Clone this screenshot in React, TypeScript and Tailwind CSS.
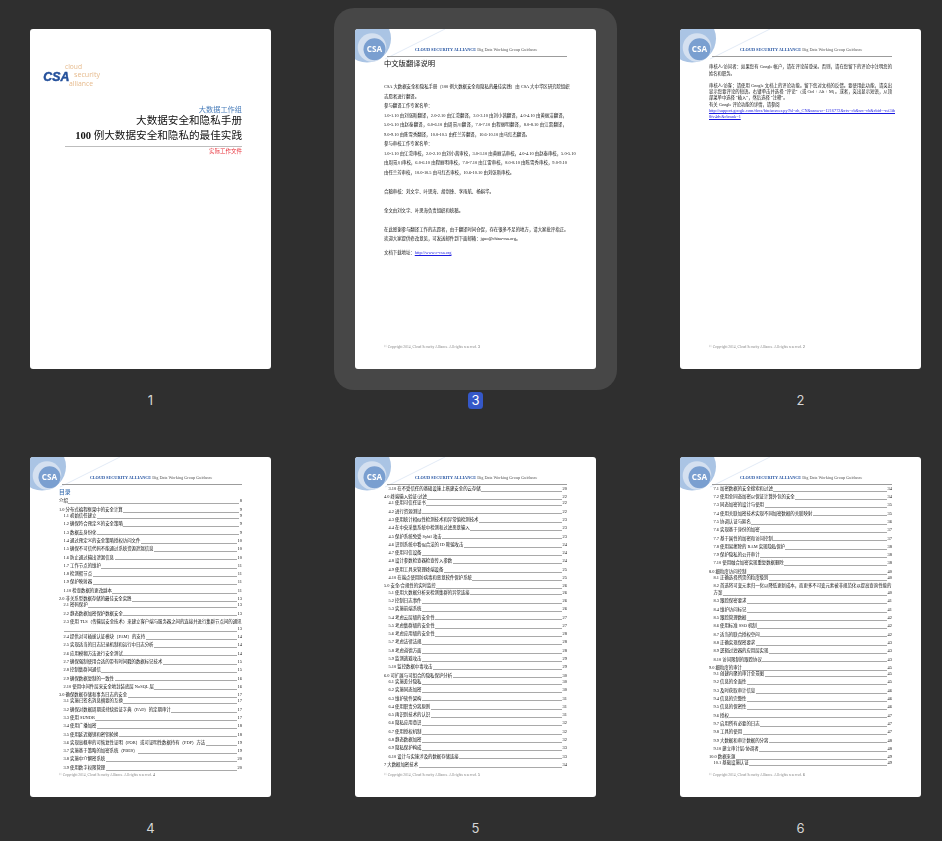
import React from "react";

const serif = "[font-family:'Liberation_Serif','Noto_Sans_CJK_SC',serif]";

type Row = { l: 0 | 1; t: string; p: number; cont?: string };
const ch = (t: string, p: number): Row => ({ l: 0, t, p });
const sub = (t: string, p: number, cont?: string): Row => ({ l: 1, t, p, cont });

const toc4: Row[] = [
  ch("介绍", 8),
  ch("1.0 分布式编程框架中的安全计算", 9),
  sub("1.1 初始信任建立", 9),
  sub("1.2 确保符合预定义的安全策略", 9),
  sub("1.3 数据去身份化", 9),
  sub("1.4 通过预定义的安全策略授权访问文件", 10),
  sub("1.5 确保不可信代码不能通过系统资源泄漏信息", 10),
  sub("1.6 防止通过输出泄漏信息", 10),
  sub("1.7 工作节点的维护", 11),
  sub("1.8 检测假节点", 11),
  sub("1.9 保护映射器", 11),
  sub("1.10 检查数据的更改副本", 11),
  ch("2.0 非关系型数据存储的最佳安全实践", 13),
  sub("2.1 密码保护", 13),
  sub("2.2 静态数据加密保护数据安全", 13),
  sub("2.3 使用 TLS（传输层安全技术）来建立客户端与服务器之间的连接并进行集群节点间的通讯", 13, ""),
  sub("2.4 提供对可插拔认证模块（PAM）的支持", 14),
  sub("2.5 实现适当的日志记录机制和运行中日志分析", 14),
  sub("2.6 应用模糊方法进行安全测试", 14),
  sub("2.7 确保强制使用合适的带有时间戳的数据标记技术", 15),
  sub("2.8 控制集群间通信", 15),
  sub("2.9 确保数据复制的一致性", 16),
  sub("2.10 使用中间件层来安全地封装底层 NoSQL 层", 16),
  ch("3.0 确保数据存储和事务日志的安全", 17),
  sub("3.1 实施已签名消息摘要的互换", 17),
  sub("3.2 确保对数据周期或持续验证字典（PAD）的定期审计", 17),
  sub("3.3 使用 SUNDR", 17),
  sub("3.4 使用广播加密", 18),
  sub("3.5 使用延迟撤销和密钥轮换", 18),
  sub("3.6 实现高概率的可恢复性证明（POR）或可证明性数据持有（PDP）方法", 19),
  sub("3.7 实施基于策略的加密系统（PBES）", 19),
  sub("3.8 实施中介解密系统", 20),
  sub("3.9 使用数字权限管理", 20),
];

const toc5: Row[] = [
  sub("3.10 在不受信任的基础设施上搭建安全的云存储", 20),
  ch("4.0 终端输入验证/过滤", 22),
  sub("4.1 使用可信任证书", 22),
  sub("4.2 进行资源测试", 22),
  sub("4.3 使用统计相似性检测技术和异常值检测技术", 23),
  sub("4.4 在中央采集系统中检测和过滤恶意输入", 23),
  sub("4.5 保护系统免受 Sybil 攻击", 23),
  sub("4.6 识别系统中看似合法的 ID 欺骗攻击", 24),
  sub("4.7 使用可信设备", 24),
  sub("4.8 设计参数检查器检查传入参数", 24),
  sub("4.9 使用工具来管理终端设备", 25),
  sub("4.10 在端点使用防病毒和恶意软件保护系统", 25),
  ch("5.0 安全/合规性的实时监控", 26),
  sub("5.1 使用大数据分析来检测集群的异常连接", 26),
  sub("5.2 控制日志事件", 26),
  sub("5.3 实施前端系统", 26),
  sub("5.4 考虑云层级的安全性", 27),
  sub("5.5 考虑集群级的安全性", 27),
  sub("5.6 考虑应用级的安全性", 28),
  sub("5.7 考虑法律法规", 28),
  sub("5.8 考虑道德方面", 28),
  sub("5.9 监测逃避攻击", 29),
  sub("5.10 监控数据中毒攻击", 29),
  ch("6.0 可扩展与可组合的隐私保护分析", 30),
  sub("6.1 实施差分隐私", 30),
  sub("6.2 实施同态加密", 30),
  sub("6.3 维护软件架构", 31),
  sub("6.4 使用职责分离原则", 31),
  sub("6.5 再识别技术的认识", 31),
  sub("6.6 隐私应用意识", 32),
  sub("6.7 使用授权机制", 32),
  sub("6.8 静态数据加密", 32),
  sub("6.9 隐私保护构成", 33),
  sub("6.10 设计与实施涉及的数据存储连接", 33),
  ch("7 大数据加密技术", 34),
];

const toc6: Row[] = [
  sub("7.1 加密数据的安全搜索和过滤", 34),
  sub("7.2 使用全同态加密以保证计算外包的安全", 34),
  sub("7.3 同态加密的设计与使用", 35),
  sub("7.4 使用关联加密技术实现不同加密数据的关联映射", 35),
  sub("7.5 协调认证与匿名", 36),
  sub("7.6 实现基于身份的加密", 37),
  sub("7.7 基于属性的加密和访问控制", 37),
  sub("7.8 使用易擦除的 RAM 实现隐私保护", 38),
  sub("7.9 保护隐私的公开审计", 38),
  sub("7.10 使用融合加密实现重复数据删除", 38),
  ch("8.0 细粒度访问控制", 40),
  sub("8.1 正确选择所需的粒度级别", 40),
  sub("8.2 首选将可变元素归一化以降低更新成本，而更多不可变元素被非规范化以提高查询性能的", 40, "方案"),
  sub("8.3 跟踪保密要求", 41),
  sub("8.4 维护访问标记", 41),
  sub("8.5 跟踪管理数据", 42),
  sub("8.6 使用标准 SSO 机制", 42),
  sub("8.7 适当的联合授权空间", 42),
  sub("8.8 正确实现保密要求", 43),
  sub("8.9 逻辑过滤器的应用层实现", 43),
  sub("8.10 访问限制的跟踪协议", 43),
  ch("9.0 细粒度的审计", 45),
  sub("9.1 创建内聚的审计全景图", 45),
  sub("9.2 信息的全面性", 45),
  sub("9.3 及时获取审计信息", 46),
  sub("9.4 信息的完整性", 46),
  sub("9.5 信息的保密性", 46),
  sub("9.6 授权", 47),
  sub("9.7 启用所有必要的日志", 47),
  sub("9.8 工具的使用", 47),
  sub("9.9 大数据和审计数据的分离", 48),
  sub("9.10 建立审计层/协调者", 48),
  ch("10.0 数据来源", 49),
  sub("10.1 基础设施认证", 49),
];

function Leader({ p, text }: { p: number; text?: string }) {
  return (
    <div className="flex items-end h-[6.3px] leading-[6.3px]">
      {text ? <span className="whitespace-nowrap">{text}</span> : null}
      <span className="flex-1 h-0 mb-[0.5px] mx-[0.5px] border-b border-[#a9a9a9]" />
      <span>{p}</span>
    </div>
  );
}

function Toc({ rows }: { rows: Row[] }) {
  return (
    <div className={`text-[4.4px] text-[#111] ${serif}`}>
      {rows.map((r, i) => {
        const afterChapter = i > 0 && rows[i - 1].l === 0 && r.l === 1;
        return (
          <div
            key={i}
            className={`${r.l === 1 ? "pl-[4.5px]" : ""} ${i === 0 || afterChapter ? "" : "mt-[2px]"}`}
          >
            {r.cont !== undefined ? (
              <>
                <div className="h-[6.3px] leading-[6.3px] whitespace-nowrap">{r.t}</div>
                <div className="mt-[0.5px]">
                  <Leader p={r.p} text={r.cont || undefined} />
                </div>
              </>
            ) : (
              <Leader p={r.p} text={r.t} />
            )}
          </div>
        );
      })}
    </div>
  );
}

function Logo() {
  return (
    <svg viewBox="0 0 100 40" className="absolute left-0 top-0 w-[100px] h-[40px] blur-[0.25px]">
      <line x1="90" y1="0" x2="30" y2="30" stroke="#dce6f4" strokeWidth="0.8" />
      <circle cx="12" cy="9.5" r="24" fill="#aac4e4" />
      <circle cx="17" cy="18.5" r="14.3" fill="#d4e0f0" />
      <circle cx="19.5" cy="20.3" r="11" fill="#7a9fd0" />
      <text
        x="19.5"
        y="23.2"
        textAnchor="middle"
        fontSize="8.2"
        fontWeight="700"
        fill="#ffffff"
        fontFamily="'Open Sans', sans-serif"
      >
        CSA
      </text>
    </svg>
  );
}

function Header() {
  return (
    <div className="ml-[3px] h-[28.3px] pt-[17.5px] pl-[27.7px] border-b border-[#9c9c9c] shrink-0">
      <div className={`relative text-[4.26px] leading-[5.6px] whitespace-nowrap text-[#555] ${serif}`}>
        <span className="font-bold text-[#1f4f9f]">CLOUD SECURITY ALLIANCE</span> Big Data Working Group Guidance
      </div>
    </div>
  );
}

function Footer({ n }: { n: number }) {
  return (
    <div className={`mt-auto mb-[19px] h-[6px] leading-[6px] text-[3.65px] text-[#888] whitespace-nowrap ${serif}`}>
      © Copyright 2014, Cloud Security Alliance. All rights reserved. <span className="text-[#444]">{n}</span>
    </div>
  );
}

function Sheet({ children, n }: { children: React.ReactNode; n: number }) {
  return (
    <div className="relative w-[241px] h-[340px] bg-white rounded-[3px] overflow-hidden">
      <Logo />
      <div className="relative flex flex-col h-full px-[29px] blur-[0.25px]">
        <Header />
        {children}
        <Footer n={n} />
      </div>
    </div>
  );
}

function Line({ children, full, className = "" }: { children: React.ReactNode; full?: boolean; className?: string }) {
  return (
    <div className={`h-[9.5px] leading-[9.5px] whitespace-nowrap ${full ? "[text-align-last:justify]" : ""} ${className}`}>
      {children}
    </div>
  );
}

function CoverPage() {
  return (
    <div className="w-[241px] h-[340px] bg-white rounded-[3px] overflow-hidden pt-[30px] blur-[0.2px]">
      <svg viewBox="0 0 60 30" className="ml-[13px] w-[60px] h-[30px]">
        <g fontFamily="'Open Sans', sans-serif" fontSize="7.2" fill="#e6bb8e">
          <text x="22" y="10" textLength="17" lengthAdjust="spacingAndGlyphs">cloud</text>
          <text x="31" y="18" textLength="26" lengthAdjust="spacingAndGlyphs">security</text>
          <text x="26" y="26.5" textLength="24" lengthAdjust="spacingAndGlyphs">alliance</text>
        </g>
        <text
          x="0.3"
          y="22"
          fontFamily="'Liberation Sans', sans-serif"
          fontSize="13.5"
          fontWeight="700"
          fontStyle="italic"
          fill="#24509b"
          stroke="#24509b"
          strokeWidth="0.5"
          textLength="26"
          lengthAdjust="spacingAndGlyphs"
        >
          CSA
        </text>
      </svg>
      <div className={`mt-[17.2px] mr-[29px] text-right ${serif}`}>
        <div className="h-[8.3px] leading-[8.3px] text-[7.2px] text-[#4a7ebb]">大数据工作组</div>
        <div className="h-[14.4px] leading-[14.4px] text-[10.6px] text-[#111]">大数据安全和隐私手册</div>
        <div className="h-[14.4px] leading-[14.4px] text-[10.6px] text-[#111]">
          <span className="font-bold">100</span> 例大数据安全和隐私的最佳实践
        </div>
        <div className="mt-[3px] ml-[35px] border-b border-[#bdbdbd]" />
        <div className="mt-[0.5px] h-[7px] leading-[7px] text-[5.5px] text-[#e8333c]">实际工作文件</div>
      </div>
    </div>
  );
}

function Thumb({ n, selected, children }: { n: number; selected?: boolean; children: React.ReactNode }) {
  return (
    <div className="flex flex-col items-center w-[283px]">
      <div className={`p-[21px] rounded-[20px] ${selected ? "bg-[#474747]" : ""}`}>{children}</div>
      <div
        className={`mt-[2px] w-[15px] h-[17px] leading-[17px] rounded-[3.5px] text-center text-[13px] [font-family:Inter,sans-serif] ${
          selected ? "bg-[#3558c8] text-white" : "text-[#d6d6d6]"
        }`}
      >
        {n}
      </div>
    </div>
  );
}

function TranslationNote() {
  return (
    <div className={`text-[4.4px] text-[#111] ${serif}`}>
      <div className="mt-[2.7px] h-[8px] leading-[8px] text-[7.3px] text-[#111]">中文版翻译说明</div>
      <div className="mt-[14.5px]">
        <Line full>CSA 大数据安全和隐私手册（100 例大数据安全和隐私的最佳实践）由 CSA 大中华区研究院组织</Line>
        <Line>志愿者进行翻译。</Line>
        <Line>参与翻译工作专家名单：</Line>
        <Line full>1.0-1.10 由刘张斯翻译，2.0-2.10 由江湾翻译，3.0-3.10 由刘小茜翻译，4.0-4.10 由黄丽洁翻译，</Line>
        <Line full>5.0-5.10 由赵泰翻译，6.0-6.10 由周景川翻译，7.0-7.10 由程丽明翻译，8.0-8.10 由江雷翻译，</Line>
        <Line>9.0-9.10 由陈雪秀翻译，10.0-10.5 由任兰芳翻译，10.6-10.10 由马红杰翻译。</Line>
        <Line>参与审校工作专家名单：</Line>
        <Line full>1.0-1.10 由江湾审校，2.0-2.10 由刘小茜审校，3.0-3.10 由黄丽洁审校，4.0-4.10 由赵泰审校，5.0-5.10</Line>
        <Line full>由周景川审校，6.0-6.10 由程丽明审校，7.0-7.10 由江雷审校，8.0-8.10 由陈雪秀审校，9.0-9.10</Line>
        <Line>由任兰芳审校，10.0-10.5 由马红杰审校，10.6-10.10 由刘张斯审校。</Line>
        <Line className="mt-[9.5px]">合稿审核：刘文宇、叶思海、胡剑锋、李雨航、杨娟华。</Line>
        <Line className="mt-[9.5px]">全文由刘文宇、叶思海负责组织和统稿。</Line>
        <Line className="mt-[9.5px]">在此感谢参与翻译工作的志愿者，由于翻译时间仓促，存在很多不足的地方，请大家批评指正。</Line>
        <Line>欢迎大家提供修改意见，可发送邮件到下面邮箱：jguo@china-csa.org。</Line>
        <Line className="mt-[4.5px]">
          文档下载地址：<span className="text-[#1a1ae0] underline">http://www.c-csa.org</span>
        </Line>
      </div>
    </div>
  );
}

function ReviewerNote() {
  return (
    <div className={`mt-[7px] text-[4.3px] leading-[6.3px] text-[#111] ${serif}`}>
      <p className="text-justify">审核人/访问者：如果您有 Google 帐户，请在评论前登录。否则，请在您留下的评论中注明您的姓名和职务。</p>
      <p className="mt-[6px] text-justify">
        审核人/访客：请使用 Google 文档上的评论功能。留下您对文档的反馈。要使用此功能，请突出显示您要评论的短语。右键单击并选择 “评论”（或 Ctrl + Alt + M）。或者，突出显示短语，从顶部菜单中选择 “插入”，然后选择 “注释”。
      </p>
      <p>有关 Google 评论功能的详情，请参阅</p>
      <p className="text-[#1a1ae0] underline whitespace-nowrap [text-align-last:justify]">
        http://support.google.com/docs/bin/answer.py?hl=zh_CN&amp;answer=1216772&amp;ctx=cb&amp;src=cb&amp;cbid=-rei3ib
      </p>
      <p className="text-[#1a1ae0] underline">8fv4dv&amp;cbrank=1</p>
    </div>
  );
}

export default function App() {
  return (
    <div className="h-screen overflow-hidden bg-[#2f2f2f] pt-[8px] pl-[9px]">
      <div className="grid grid-cols-[283px_283px_283px] gap-x-[42px] gap-y-[27px]">
        <Thumb n={1}>
          <CoverPage />
        </Thumb>
        <Thumb n={3} selected>
          <Sheet n={3}>
            <TranslationNote />
          </Sheet>
        </Thumb>
        <Thumb n={2}>
          <Sheet n={2}>
            <ReviewerNote />
          </Sheet>
        </Thumb>
        <Thumb n={4}>
          <Sheet n={4}>
            <div className={`mt-[3.7px] h-[6px] leading-[6px] text-[5.8px] font-medium text-[#3b6fb0] ${serif}`}>目录</div>
            <div className="mt-[3.5px]">
              <Toc rows={toc4} />
            </div>
          </Sheet>
        </Thumb>
        <Thumb n={5}>
          <Sheet n={5}>
            <div className="mt-[0.5px]">
              <Toc rows={toc5} />
            </div>
          </Sheet>
        </Thumb>
        <Thumb n={6}>
          <Sheet n={6}>
            <div className="mt-[0.5px]">
              <Toc rows={toc6} />
            </div>
          </Sheet>
        </Thumb>
      </div>
    </div>
  );
}
